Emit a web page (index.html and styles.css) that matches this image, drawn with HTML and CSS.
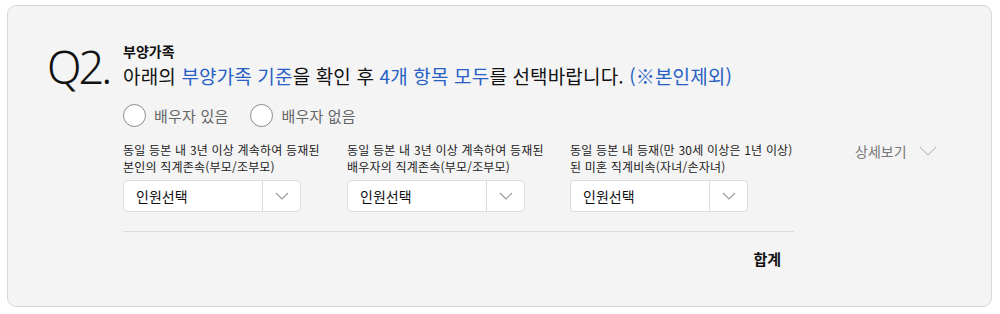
FILE: index.html
```html
<!DOCTYPE html>
<html lang="ko">
<head>
<meta charset="utf-8">
<title>부양가족</title>
<link rel="stylesheet" href="styles.css">
</head>
<body>
<section class="panel">
  <div class="qnum">Q2.</div>
  <div class="content">
    <h2 class="title">부양가족</h2>
    <p class="desc">아래의 <span class="hl">부양가족 기준</span>을 확인 후 <span class="hl">4개 항목 모두</span>를 선택바랍니다. <span class="hl">(※본인제외)</span></p>
    <div class="radios">
      <label class="radio"><span class="circle"></span><span class="rlabel">배우자 있음</span></label>
      <label class="radio"><span class="circle"></span><span class="rlabel">배우자 없음</span></label>
    </div>
    <div class="fields">
      <div class="field">
        <div class="flabel">동일 등본 내 3년 이상 계속하여 등재된<br>본인의 직계존속(부모/조부모)</div>
        <div class="select"><span class="stext">인원선택</span><span class="sarrow"><svg width="14" height="8" viewBox="0 0 14 8"><path d="M1 1l6 6 6-6" fill="none" stroke="#9a9a9a" stroke-width="1.1"/></svg></span></div>
      </div>
      <div class="field">
        <div class="flabel">동일 등본 내 3년 이상 계속하여 등재된<br>배우자의 직계존속(부모/조부모)</div>
        <div class="select"><span class="stext">인원선택</span><span class="sarrow"><svg width="14" height="8" viewBox="0 0 14 8"><path d="M1 1l6 6 6-6" fill="none" stroke="#9a9a9a" stroke-width="1.1"/></svg></span></div>
      </div>
      <div class="field">
        <div class="flabel">동일 등본 내 등재(만 30세 이상은 1년 이상)<br>된 미혼 직계비속(자녀/손자녀)</div>
        <div class="select"><span class="stext">인원선택</span><span class="sarrow"><svg width="14" height="8" viewBox="0 0 14 8"><path d="M1 1l6 6 6-6" fill="none" stroke="#9a9a9a" stroke-width="1.1"/></svg></span></div>
      </div>
      <div class="more">상세보기 <svg class="morechev" width="18" height="10" viewBox="0 0 18 10"><path d="M1 1l8 8 8-8" fill="none" stroke="#c4c4c4" stroke-width="1.1"/></svg></div>
    </div>
    <div class="total">
      <span class="tlabel">합계</span>
    </div>
  </div>
</section>
</body>
</html>
```

FILE: styles.css
```css
* { box-sizing: border-box; }
html, body { margin: 0; padding: 0; background: #fff; }
body {
  font-family: "Noto Sans CJK KR", "Noto Sans", sans-serif;
  color: #111;
}
.panel {
  margin: 5px 8px 0 7px;
  height: 302px;
  border: 1px solid #d8d8d8;
  border-radius: 9px;
  background: #f4f4f4;
  display: flex;
  padding: 35px 0 0 39px;
}
.qnum {
  width: 76px;
  flex: none;
  font-family: "Noto Sans", sans-serif;
  font-weight: 300;
  font-size: 45px;
  letter-spacing: -3px;
  line-height: 1;
  padding-top: 3px;
  color: #111;
}
.content { flex: 1; }
.title {
  margin: 0;
  font-size: 14px;
  font-weight: 700;
  line-height: 20px;
}
.desc {
  margin: 2px 0 0;
  font-size: 19px;
  letter-spacing: 0.15px;
  line-height: 26px;
  color: #111;
  white-space: nowrap;
}
.hl { color: #2760c4; }
.radios {
  display: flex;
  gap: 22px;
  margin-top: 14px;
  height: 24px;
  align-items: center;
}
.radio { display: flex; align-items: center; gap: 8px; }
.circle {
  width: 23px; height: 23px;
  border: 1px solid #8a8a8a;
  border-radius: 50%;
  background: #fff;
}
.rlabel { font-size: 15px; color: #666; letter-spacing: 0.2px; }
.fields {
  display: grid;
  grid-template-columns: 224px 223px 285px auto;
  align-items: start;
  margin-top: 14px;
}
.flabel {
  font-size: 12px;
  line-height: 17px;
  color: #222;
  letter-spacing: 0.2px;
  white-space: nowrap;
}
.select {
  margin-top: 5px;
  width: 178px;
  height: 32px;
  background: #fff;
  border: 1px solid #dcdcdc;
  border-radius: 4px;
  display: flex;
}
.stext {
  flex: 1;
  padding-left: 12px;
  font-size: 14px;
  line-height: 30px;
  color: #111;
}
.sarrow {
  width: 38px;
  border-left: 1px solid #dcdcdc;
  display: flex;
  align-items: center;
  justify-content: center;
}
.more {
  font-size: 14px;
  color: #777;
  line-height: 18px;
  padding-top: 1px;
  display: flex;
  align-items: center;
  gap: 12px;
  white-space: nowrap;
}
.total {
  margin-top: 19px;
  width: 671px;
  border-top: 1px solid #dcdcdc;
  padding: 14px 13px 0 0;
  text-align: right;
}
.tlabel {
  font-size: 15px;
  font-weight: 700;
  line-height: 20px;
}
```
